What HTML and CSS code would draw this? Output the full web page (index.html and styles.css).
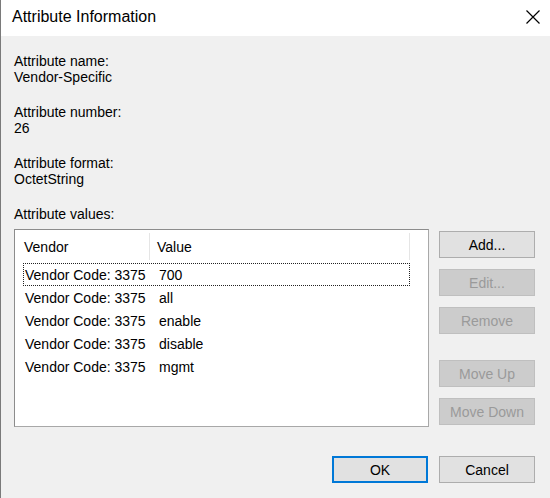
FILE: index.html
```html
<!DOCTYPE html>
<html>
<head>
<meta charset="utf-8">
<title>Attribute Information</title>
<link rel="stylesheet" href="styles.css">
</head>
<body>
<div class="window">
  <div class="titlebar">
    <span class="title">Attribute Information</span>
    <svg class="close" width="16" height="16" viewBox="0 0 16 16"><path d="M1.5 1.5 L14.5 14.5 M14.5 1.5 L1.5 14.5" stroke="#000" stroke-width="1.2" fill="none"/></svg>
  </div>
  <div class="content">
    <div class="group"><div>Attribute name:</div><div>Vendor-Specific</div></div>
    <div class="group"><div>Attribute number:</div><div>26</div></div>
    <div class="group"><div>Attribute format:</div><div>OctetString</div></div>
    <div class="values-label">Attribute values:</div>
    <div class="values-area">
      <div class="listbox">
        <div class="header">
          <div class="hcol c1">Vendor</div>
          <div class="hcol c2">Value</div>
        </div>
        <div class="rows">
          <div class="row focus"><span class="c1">Vendor Code: 3375</span><span class="c2">700</span></div>
          <div class="row"><span class="c1">Vendor Code: 3375</span><span class="c2">all</span></div>
          <div class="row"><span class="c1">Vendor Code: 3375</span><span class="c2">enable</span></div>
          <div class="row"><span class="c1">Vendor Code: 3375</span><span class="c2">disable</span></div>
          <div class="row"><span class="c1">Vendor Code: 3375</span><span class="c2">mgmt</span></div>
        </div>
      </div>
      <div class="side-buttons">
        <button class="btn">Add...</button>
        <button class="btn disabled">Edit...</button>
        <button class="btn disabled">Remove</button>
        <button class="btn disabled move-up">Move Up</button>
        <button class="btn disabled">Move Down</button>
      </div>
    </div>
    <div class="footer">
      <button class="btn default">OK</button>
      <button class="btn">Cancel</button>
    </div>
  </div>
</div>
</body>
</html>
```

FILE: styles.css
```css
html, body {
  margin: 0;
  padding: 0;
}
body {
  width: 550px;
  height: 498px;
  overflow: hidden;
  background: #f0f0f0;
  font-family: "Liberation Sans", Arial, sans-serif;
  font-size: 14px;
  color: #000;
}
.window {
  box-sizing: border-box;
  width: 550px;
  height: 498px;
  border-left: 1px solid #7a7a7a;
  display: flex;
  flex-direction: column;
}
.titlebar {
  height: 36px;
  flex: none;
  background: #fff;
  display: flex;
  align-items: center;
  justify-content: space-between;
  padding: 0 9px 3px 11px;
  box-sizing: border-box;
}
.title {
  font-size: 16px;
}
.close {
  display: block;
  margin-top: 1px;
}
.content {
  flex: 1;
  display: flex;
  flex-direction: column;
  padding: 17px 15px 0 13px;
}
.group {
  line-height: 16px;
  margin-bottom: 19px;
}
.values-label {
  line-height: 16px;
  margin-bottom: 7px;
}
.values-area {
  display: flex;
  gap: 10px;
}
.listbox {
  box-sizing: border-box;
  width: 416px;
  height: 198px;
  background: #fff;
  border: 1px solid #8c8c8c;
  border-right-color: #a8a8a8;
  border-bottom-color: #a8a8a8;
}
.header {
  display: flex;
  height: 33px;
  align-items: center;
}
.hcol {
  box-sizing: border-box;
  height: 27px;
  display: flex;
  align-items: center;
  border-right: 1px solid #e5e5e5;
}
.header .c1 {
  width: 135px;
  padding-left: 9px;
}
.header .c2 {
  width: 260px;
  padding-left: 7px;
}
.rows {
  padding-left: 8px;
}
.row {
  box-sizing: border-box;
  width: 387px;
  height: 23px;
  display: flex;
  align-items: center;
  border: 1px solid transparent;
}
.row.focus {
  border: 1px dotted #222;
}
.row .c1 {
  width: 134px;
  padding-left: 1px;
}
.side-buttons {
  display: flex;
  flex-direction: column;
  gap: 11px;
  padding-top: 2px;
}
.btn {
  box-sizing: border-box;
  width: 96px;
  height: 27px;
  margin: 0;
  padding: 0;
  background: #e1e1e1;
  border: 1px solid #adadad;
  font-family: "Liberation Sans", Arial, sans-serif;
  font-size: 14px;
  color: #000;
}
.btn.disabled {
  background: #cccccc;
  border-color: #bfbfbf;
  color: #9a9a9a;
}
.btn.move-up {
  margin-top: 15px;
}
.btn.default {
  border: 2px solid #0078d7;
}
.footer {
  display: flex;
  justify-content: flex-end;
  gap: 11px;
  margin-top: 29px;
}
```
